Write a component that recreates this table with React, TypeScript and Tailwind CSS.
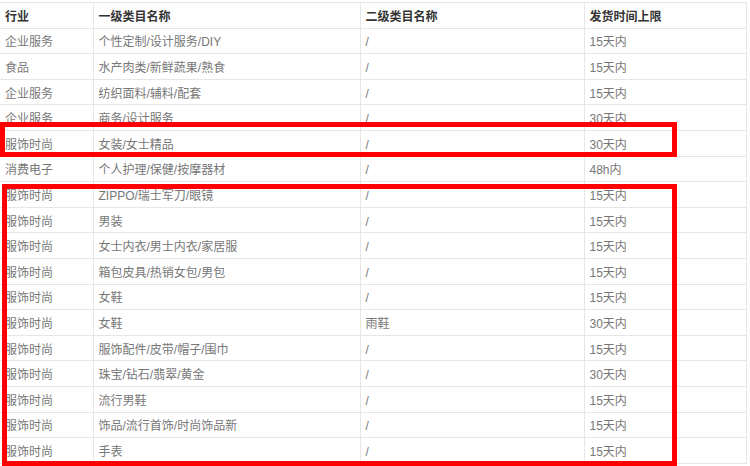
import React from "react";

type Row = [string, string, string, string];

const rows: Row[] = [
  ["企业服务", "个性定制/设计服务/DIY", "/", "15天内"],
  ["食品", "水产肉类/新鲜蔬果/熟食", "/", "15天内"],
  ["企业服务", "纺织面料/辅料/配套", "/", "15天内"],
  ["企业服务", "商务/设计服务", "/", "30天内"],
  ["服饰时尚", "女装/女士精品", "/", "30天内"],
  ["消费电子", "个人护理/保健/按摩器材", "/", "48h内"],
  ["服饰时尚", "ZIPPO/瑞士军刀/眼镜", "/", "15天内"],
  ["服饰时尚", "男装", "/", "15天内"],
  ["服饰时尚", "女士内衣/男士内衣/家居服", "/", "15天内"],
  ["服饰时尚", "箱包皮具/热销女包/男包", "/", "15天内"],
  ["服饰时尚", "女鞋", "/", "15天内"],
  ["服饰时尚", "女鞋", "雨鞋", "30天内"],
  ["服饰时尚", "服饰配件/皮带/帽子/围巾", "/", "15天内"],
  ["服饰时尚", "珠宝/钻石/翡翠/黄金", "/", "30天内"],
  ["服饰时尚", "流行男鞋", "/", "15天内"],
  ["服饰时尚", "饰品/流行首饰/时尚饰品新", "/", "15天内"],
  ["服饰时尚", "手表", "/", "15天内"],
];

const cell = "h-[25.6px] border border-[#e6e6e6] px-[5px] pt-[3px] pb-0 text-left align-middle";

export default function App() {
  return (
    <div
      className="relative w-[750px] h-[466px] overflow-hidden bg-white pt-[2px] text-[12px] leading-none"
      style={{ fontFamily: '"Liberation Sans", "Noto Sans CJK SC", sans-serif' }}
    >
      <table className="w-[746px] table-fixed border-collapse">
        <colgroup>
          <col className="w-[93px]" />
          <col className="w-[267px]" />
          <col className="w-[224px]" />
          <col className="w-[162px]" />
        </colgroup>
        <thead>
          <tr className="text-[#333] font-semibold">
            <th className={cell + " border-l-0"}>行业</th>
            <th className={cell}>一级类目名称</th>
            <th className={cell}>二级类目名称</th>
            <th className={cell}>发货时间上限</th>
          </tr>
        </thead>
        <tbody className="text-[#777]">
          {rows.map((r, i) => (
            <tr key={i} className={i === 6 ? "border-t border-t-[#d4d4d4]" : ""}>
              <td className={cell + " border-l-0"}>{r[0]}</td>
              <td className={cell}>{r[1]}</td>
              <td className={cell}>{r[2]}</td>
              <td className={cell}>{r[3]}</td>
            </tr>
          ))}
        </tbody>
      </table>

      {/* red highlight boxes */}
      <div className="absolute left-0 top-[122px] w-[677px] h-[35px] border-[5px] border-[#f00]" />
      <div className="absolute left-[2px] top-[184px] w-[675px] h-[282px] border-[5px] border-[#f00]" />
    </div>
  );
}
